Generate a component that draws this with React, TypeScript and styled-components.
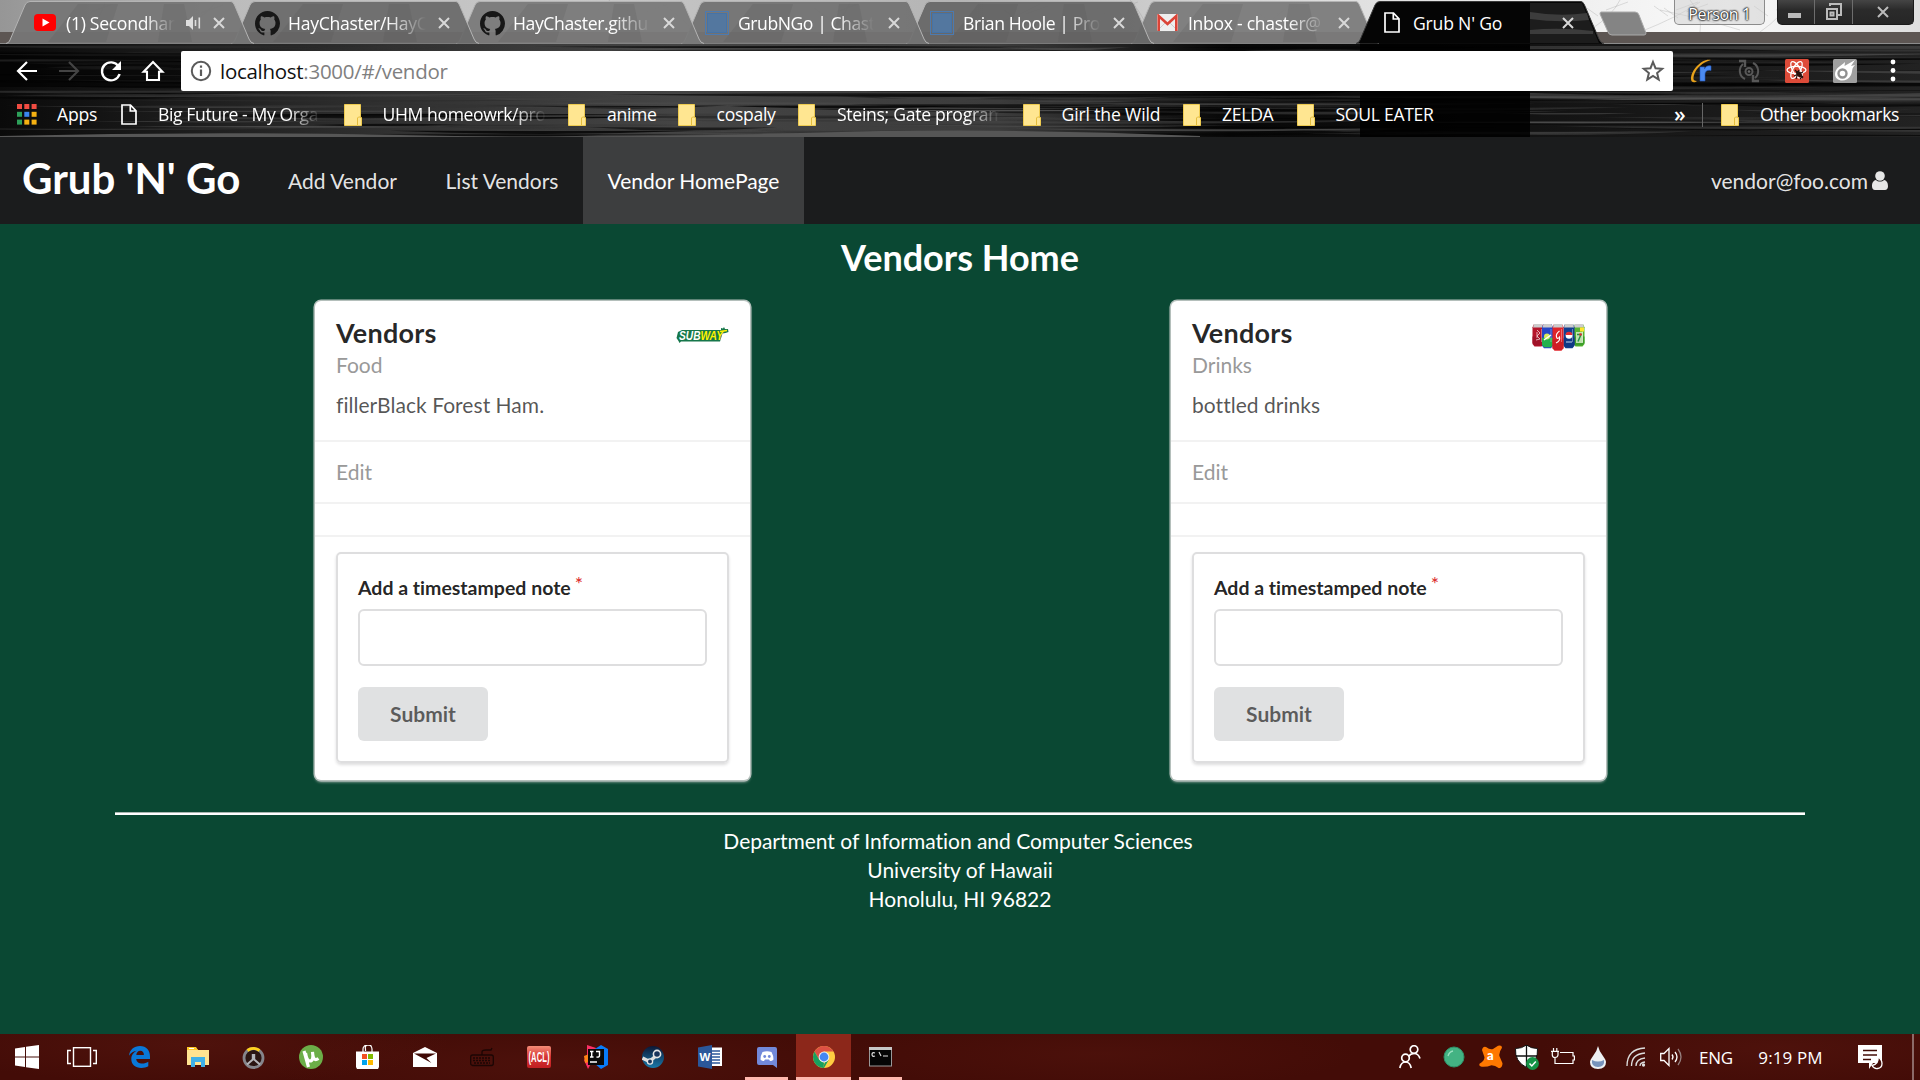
import React from 'react';
import styled, { createGlobalStyle, css } from 'styled-components';

const GlobalStyle = createGlobalStyle`
  * { box-sizing: border-box; }
  body { margin: 0; overflow: hidden; background: #0a4833; }
`;

const ui = '"Open Sans", "Noto Sans", sans-serif';

const Screen = styled.div`
  width: 1920px;
  height: 1080px;
  display: flex;
  flex-direction: column;
  overflow: hidden;
  font-family: Lato, "Liberation Sans", sans-serif;
  font-size: 21px;
  font-variant-ligatures: none;
`;

/* ---------- browser chrome ---------- */
const Chrome = styled.header`
  position: relative;
  height: 137px;
  flex: none;
  display: flex;
  flex-direction: column;
  font-family: ${ui};
  color: #fff;
  background: #101010;
  isolation: isolate;
`;
const Texture = styled.svg`
  position: absolute;
  inset: 0;
  z-index: -1;
  display: block;
`;
const TabStrip = styled.div`
  height: 43px;
  display: flex;
  padding-left: 8px;
`;
const TabBox = styled.div<{ $z: number; $first?: boolean }>`
  position: relative;
  z-index: ${(p) => p.$z};
  width: 225px;
  height: 43px;
  flex: none;
  display: flex;
  align-items: center;
  padding: 2px 0 0 ${(p) => (p.$first ? 25 : 22)}px;
`;
const TabShape = styled.svg`
  position: absolute;
  left: 0;
  top: 0;
  z-index: -1;
  overflow: visible;
`;
const TabIcon = styled.span`
  width: 24px;
  height: 24px;
  flex: none;
  display: grid;
  place-items: center;
  margin-right: 9px;
`;
const TabTitle = styled.span<{ $w: number; $fade?: boolean; $ls?: number }>`
  width: ${(p) => p.$w}px;
  font-size: 17.6px;
  letter-spacing: ${(p) => p.$ls ?? -0.3}px;
  line-height: 26px;
  white-space: nowrap;
  ${(p) => p.$fade && css`mask-image: linear-gradient(90deg, #000 72%, transparent);`}
`;
const TabEnd = styled.span`
  display: flex;
  align-items: center;
  gap: 11px;
  margin-left: auto;
  margin-right: 7px;
`;
const ActiveTabEnd = styled(TabEnd)`
  margin-right: 8px;
`;
const NewTab = styled.svg`
  margin: 11px 0 0 14px;
  width: 52px;
  height: 26px;
  flex: none;
`;
const WindowTools = styled.div`
  display: flex;
  margin-left: auto;
  padding-right: 6px;
  gap: 12px;
`;
const Person = styled.div`
  width: 91px;
  height: 25px;
  border: 1px solid #8b8b8b;
  border-top: 0;
  border-radius: 0 0 5px 5px;
  background: rgba(205, 205, 205, 0.5);
  color: #fff;
  font-size: 16px;
  letter-spacing: -0.4px;
  line-height: 28px;
  text-align: center;
  text-shadow: 0 0 2px #000, 0 0 2px #000, 0 0 2px #222;
`;
const WindowButtons = styled.div`
  display: grid;
  grid-template-columns: 36px 38px 1fr;
  width: 137px;
  height: 25px;
  border: 1px solid #1a1a1a;
  border-top: 0;
  border-radius: 0 0 5px 5px;
  overflow: hidden;
  background: linear-gradient(#454545, #2b2b2b 40%, #262626);
`;
const WindowButton = styled.div`
  display: grid;
  place-items: center;
  & + & { border-left: 1px solid #6d6d6d; }
`;
const Toolbar = styled.div`
  height: 56px;
  display: flex;
  align-items: center;
  padding-left: 15px;
`;
const NavIcons = styled.div`
  display: flex;
  gap: 18px;
  width: 166px;
`;
const Omnibox = styled.div`
  width: 1492px;
  height: 40px;
  border-radius: 2px;
  background: #fff;
  display: flex;
  align-items: center;
  padding: 0 8px 0 8px;
`;
const Url = styled.span`
  margin-left: 7px;
  flex: 1;
  color: #808080;
  font-size: 20.5px;
  letter-spacing: -0.28px;
  line-height: 36px;
  b { color: #111; font-weight: 400; }
`;
const Extensions = styled.div`
  flex: 1;
  display: flex;
  align-items: center;
  gap: 24px;
  padding: 0 24px 0 16px;
  svg:last-child { margin-left: auto; }
`;
const Bookmarks = styled.div`
  height: 38px;
  display: flex;
  align-items: center;
  padding: 0 22px 5px 17px;
  margin-top: -1px;
`;
const Bookmark = styled.div`
  display: flex;
  align-items: center;
  margin-right: 22.5px;
  height: 32px;
`;
const BookmarkIcon = styled.span<{ $w: number }>`
  width: ${(p) => p.$w}px;
  height: 22px;
  flex: none;
  svg { display: block; }
`;
const BookmarkLabel = styled.span<{ $w: number; $ls?: number; $fade?: boolean }>`
  width: ${(p) => p.$w}px;
  font-size: 17.6px;
  letter-spacing: ${(p) => p.$ls ?? -0.3}px;
  line-height: 26px;
  padding-bottom: 1px;
  white-space: nowrap;
  ${(p) => p.$fade && css`mask-image: linear-gradient(90deg, #000 80%, transparent);`}
`;
const Overflow = styled.span`
  margin-left: auto;
  width: 28px;
  font-size: 21px;
  font-weight: 600;
  line-height: 26px;
  padding-bottom: 2px;
`;
const OtherBookmarks = styled.div`
  display: flex;
  align-items: center;
  height: 24px;
  padding-left: 18px;
  border-left: 1px solid #666;
`;

/* ---------- page ---------- */
const Page = styled.main`
  height: 897px;
  flex: none;
  background: #0a4833;
  color: #fff;
  display: flex;
  flex-direction: column;
`;
const Menu = styled.nav`
  height: 87px;
  flex: none;
  display: flex;
  background: #1b1c1d;
`;
const Brand = styled.h1`
  margin: 0;
  padding: 0 0 2px 22px;
  width: 264px;
  font-size: 42px;
  line-height: 83px;
  font-weight: 700;
  white-space: nowrap;
`;
const MenuItem = styled.a<{ $w: number; $active?: boolean }>`
  width: ${(p) => p.$w}px;
  text-align: center;
  line-height: 88px;
  color: ${(p) => (p.$active ? '#fff' : 'rgba(255,255,255,.9)')};
  background: ${(p) => (p.$active ? '#3d3e3f' : 'transparent')};
  white-space: nowrap;
`;
const UserItem = styled.div`
  margin-left: auto;
  padding-right: 32px;
  display: flex;
  align-items: center;
  gap: 4px;
  line-height: 88px;
  color: rgba(255, 255, 255, 0.9);
`;
const Title = styled.h2`
  margin: 11px 0 0;
  font-size: 36px;
  line-height: 44px;
  font-weight: 700;
  text-align: center;
`;
const Columns = styled.section`
  display: grid;
  grid-template-columns: 435px 435px;
  justify-content: center;
  column-gap: 421px;
  margin: 22px 0 0 1px;
`;
const CardBox = styled.article`
  height: 479px;
  background: #fff;
  border-radius: 6px;
  box-shadow: 0 0 0 1.5px #b4bfbb, 0 2px 3px 0 #b0bab6;
  display: flex;
  flex-direction: column;
`;
const CardContent = styled.div`
  height: 139px;
  padding: 15px 21px;
  display: flex;
  justify-content: space-between;
`;
const CardHeading = styled.h3`
  margin: 0;
  color: rgba(0, 0, 0, 0.85);
  font-size: 27px;
  line-height: 34px;
  letter-spacing: 0.25px;
`;
const Meta = styled.div`
  margin-top: 1px;
  line-height: 28px;
  color: #999;
`;
const Description = styled.p`
  margin: 12px 0 0;
  line-height: 28px;
  color: rgba(0, 0, 0, 0.68);
  letter-spacing: 0.04px;
`;
const Strip = styled.div<{ $h: number }>`
  height: ${(p) => p.$h}px;
  border-top: 2px solid #f2f2f2;
  padding-left: 21px;
  line-height: 60px;
  color: #999;
`;
const FormArea = styled.div`
  flex: 1;
  border-top: 2px solid #f2f2f2;
  padding: 15px 21px 0;
`;
const NoteForm = styled.form`
  height: 211px;
  border: 2px solid #dededf;
  border-radius: 5px;
  box-shadow: 0 2px 3px rgba(34, 36, 38, 0.15);
  padding: 19px 20px;
  display: flex;
  flex-direction: column;
  align-items: flex-start;
`;
const Label = styled.label`
  color: rgba(0, 0, 0, 0.87);
  font-size: 19.5px;
  font-weight: 700;
  line-height: 29px;
  white-space: nowrap;
`;
const Star = styled.span`
  margin-left: 4px;
  color: #db2828;
  font-weight: 400;
  position: relative;
  top: -4px;
`;
const Input = styled.input`
  width: 100%;
  height: 57px;
  margin-top: 7px;
  border: 2px solid #dededf;
  border-radius: 6px;
  background: #fff;
  outline: 0;
`;
const Submit = styled.button`
  width: 130px;
  height: 54px;
  margin-top: 21px;
  padding: 0 0 1px;
  border: 0;
  border-radius: 6px;
  background: #e0e1e2;
  color: rgba(0, 0, 0, 0.6);
  font: 700 21px Lato, sans-serif;
`;
const Rule = styled.hr`
  width: 1690px;
  height: 3px;
  margin: 32px auto 0;
  border: solid #fff;
  border-color: #a9b5b0 #fff #fff;
  border-width: 1px 0 2px;
`;
const Footer = styled.footer`
  margin-top: 11px;
  text-align: center;
  line-height: 29px;
  div:first-child { margin-right: 4px; letter-spacing: -0.02px; }
`;

/* ---------- taskbar ---------- */
const Taskbar = styled.footer`
  height: 46px;
  flex: none;
  display: flex;
  color: #fff;
  font-family: ${ui};
  font-size: 18px;
  background:
    radial-gradient(ellipse 260px 40px at 190px 10px, rgba(120, 40, 30, 0.22), transparent),
    radial-gradient(ellipse 300px 40px at 560px 30px, rgba(120, 40, 30, 0.18), transparent),
    radial-gradient(ellipse 260px 36px at 1100px 20px, rgba(120, 40, 30, 0.16), transparent),
    radial-gradient(ellipse 240px 40px at 1780px 14px, rgba(120, 40, 30, 0.2), transparent),
    #430c07;
`;
const Task = styled.div<{ $w?: number; $open?: boolean; $active?: boolean }>`
  width: ${(p) => p.$w ?? 57}px;
  display: grid;
  place-items: center;
  ${(p) => p.$open && css`background: linear-gradient(#ffb8ae, #ffb8ae) center bottom / 43px 3px no-repeat;`}
  ${(p) => p.$active && css`background: linear-gradient(#ffb8ae, #ffb8ae) center bottom / 55px 3px no-repeat, linear-gradient(#8c271a, #8c271a) center / 55px 100% no-repeat;`}
  svg { display: block; }
`;
const Tray = styled.div`
  margin-left: auto;
  display: flex;
`;
const TrayCell = styled.div<{ $w: number; $ls?: number }>`
  width: ${(p) => p.$w}px;
  display: grid;
  place-items: center;
  white-space: nowrap;
  font-size: 17px;
  letter-spacing: ${(p) => p.$ls ?? 0}px;
`;
const ShowDesktop = styled.div`
  width: 8px;
  border-left: 2px solid #8c6a68;
`;

/* ---------- texture ---------- */
const streaks = Array.from({ length: 230 }, (_, i) => {
  const r = (k: number) => {
    const v = Math.sin(i * 12.9898 + k * 78.233) * 43758.5453;
    return v - Math.floor(v);
  };
  const x = r(1) * 1900 - 120;
  const y = 45 + r(2) * 91;
  const w = 120 + r(3) * 380;
  const shade = r(8) > 0.6 ? 4 : Math.round(40 + r(4) * 50);
  return { x, y, w, t: 1.5 + r(5) * 5, shade, bend: (r(6) - 0.5) * 5, o: 0.35 + r(7) * 0.5 };
});

const branches = [
  [20, 30, 60, 4], [80, 40, 105, 2], [170, 38, 215, 3], [440, 38, 520, 4], [560, 34, 610, 0],
  [700, 40, 660, 2], [820, 40, 850, 2], [960, 38, 1040, 4], [1150, 40, 1130, 0], [1240, 40, 1290, 4],
  [1590, 30, 1620, 0], [1640, 32, 1700, 2], [1700, 32, 1690, 0], [1760, 32, 1790, 0], [1660, 10, 1740, 30],
];

const ChromeTexture = () => (
  <Texture width="1920" height="137" viewBox="0 0 1920 137">
    <defs>
      <linearGradient id="frame">
        <stop offset="0" stopColor="#969696" /><stop offset=".12" stopColor="#bcbcbc" />
        <stop offset=".3" stopColor="#c8c8c8" /><stop offset=".5" stopColor="#b4b4b4" />
        <stop offset=".65" stopColor="#d8d8d8" /><stop offset=".82" stopColor="#efefef" />
        <stop offset=".9" stopColor="#fafafa" /><stop offset="1" stopColor="#dedede" />
      </linearGradient>
      <linearGradient id="bar">
        <stop offset="0" stopColor="#0a0a0a" /><stop offset=".2" stopColor="#303030" />
        <stop offset=".35" stopColor="#444" /><stop offset=".52" stopColor="#3c3c3c" />
        <stop offset=".64" stopColor="#070707" /><stop offset="1" stopColor="#222" />
      </linearGradient>
      <clipPath id="barClip"><rect y="44" width="1920" height="93" /></clipPath>
    </defs>
    <rect width="1920" height="43" fill="url(#frame)" />
    {branches.map(([a, b, c, d], i) => (
      <path key={i} d={`M${a} ${b}Q${(a + c) / 2 + 8} ${(b + d) / 2} ${c} ${d}m-14 10l22 -8m-30 14l-14 -10`} stroke="#888" strokeOpacity=".25" fill="none" />
    ))}
    <rect y="32" width="1920" height="11" fill="#5d5653" />
    <rect y="43" width="1920" height="94" fill="url(#bar)" />
    <g clipPath="url(#barClip)">
      {streaks.map((s, i) => (
        <path key={i} d={`M${s.x} ${s.y}q${s.w / 2} ${s.bend} ${s.w} 0q${-s.w / 2} ${s.bend + s.t} ${-s.w} 0z`} fill={`rgb(${s.shade},${s.shade},${s.shade})`} opacity={s.o} />
      ))}
      <path d="M0 136Q200 131 400 135T800 133T1200 136V137H0Z" fill="#565656" />
      <rect y="53" width="181" height="34" fill="#000" opacity=".6" />
      <rect x="1360" y="43" width="170" height="94" fill="#000" opacity=".88" />
      <path d="M1530 46h390v3h-390zM1530 93q200 6 390 0v4q-190 6-390 1z" fill="#555" opacity=".5" />
    </g>
    <path d="M0 43.500H1360M1602 43.500H1920" stroke="#8c8c8c" />
  </Texture>
);

/* ---------- icons ---------- */
const Close = ({ color = '#d8d8d8' }) => (
  <svg width="14" height="14" viewBox="0 0 14 14"><path d="M2 2l10 10M12 2L2 12" stroke={color} strokeWidth="2" /></svg>
);
const Speaker = () => (
  <svg width="15" height="14" viewBox="0 0 15 14"><path d="M0 4h3l4-4v14l-4-4H0z" fill="#ddd" /><path d="M9.5 4v6M13.3 1.5v11" stroke="#ddd" strokeWidth="1.6" /></svg>
);
const YouTube = () => (
  <svg width="22" height="17" viewBox="0 0 22 17"><rect width="22" height="17" rx="4" fill="#f00" /><path d="M8.5 4.5v8l7-4z" fill="#fff" /></svg>
);
const GitHub = () => (
  <svg width="25" height="25" viewBox="0 0 16 16"><path fill="#171717" d="M8 0C3.58 0 0 3.58 0 8c0 3.54 2.29 6.53 5.47 7.59.4.07.55-.17.55-.38 0-.19-.01-.82-.01-1.49-2.01.37-2.53-.49-2.69-.94-.09-.23-.48-.94-.82-1.13-.28-.15-.68-.52-.01-.53.63-.01 1.08.58 1.23.82.72 1.21 1.87.87 2.33.66.07-.52.28-.87.51-1.07-1.78-.2-3.64-.89-3.64-3.95 0-.87.31-1.59.82-2.15-.08-.2-.36-1.02.08-2.12 0 0 .67-.21 2.2.82.64-.18 1.32-.27 2-.27s1.36.09 2 .27c1.53-1.04 2.2-.82 2.2-.82.44 1.1.16 1.92.08 2.12.51.56.82 1.27.82 2.15 0 3.07-1.87 3.75-3.65 3.95.29.25.54.73.54 1.48 0 1.07-.01 1.93-.01 2.2 0 .21.15.46.55.38A8.01 8.01 0 0 0 16 8c0-4.42-3.58-8-8-8z" /></svg>
);
const BlueSquare = () => (
  <svg width="24" height="24" viewBox="0 0 24 24"><rect x=".5" y=".5" width="23" height="23" fill="none" stroke="#4c7ab0" /><rect x="2.5" y="2.5" width="19" height="19" fill="#53779f" stroke="#4473a8" /></svg>
);
const Gmail = () => (
  <svg width="21" height="17" viewBox="0 0 21 17"><rect width="21" height="17" rx="1.5" fill="#eee" /><path d="M1 16L8 9M20 16l-7-7" stroke="#ccc" /><path d="M1.700 17V2l8.800 8 8.800-8v15" fill="none" stroke="#db4437" strokeWidth="2.600" /></svg>
);
const Doc = () => (
  <svg width="16" height="21" viewBox="0 0 16 21"><path d="M1 1h8.5L15 6.8V20H1zM9.3 1v6H15" fill="none" stroke="#fff" strokeWidth="1.7" /></svg>
);
const Folder = () => (
  <svg width="18" height="22" viewBox="0 0 18 22"><path d="M.5.5h16v13h1v8H.5z" fill="#ffe691" stroke="#eecb50" /><path d="M13.5 21v-7l1-1h2" fill="none" stroke="#e5bd3c" /></svg>
);
const AppsGrid = () => (
  <svg width="20" height="21" viewBox="0 0 20 21">
    {['#f04c42', '#f04c42', '#f04c42', '#2da05a', '#3a86f0', '#f5b112', '#2da05a', '#f5b112', '#f5b112'].map((c, i) => (
      <rect key={i} x={(i % 3) * 7.3} y={Math.floor(i / 3) * 7.8} width="5" height="5" fill={c} />
    ))}
  </svg>
);
const Back = ({ color }: { color: string }) => (
  <svg width="24" height="24" viewBox="0 0 24 24"><path d="M12 3l-9 9 9 9M3 12h19" fill="none" stroke={color} strokeWidth="2.2" /></svg>
);
const Forward = ({ color }: { color: string }) => (
  <svg width="24" height="24" viewBox="0 0 24 24"><path d="M12 3l9 9-9 9M21 12H2" fill="none" stroke={color} strokeWidth="2.2" /></svg>
);
const Reload = () => (
  <svg width="24" height="24" viewBox="0 0 24 24"><path d="M19.5 7.4A9 9 0 1 0 20.6 15" fill="none" stroke="#fff" strokeWidth="2.4" /><path d="M22 2v9h-9z" fill="#fff" /></svg>
);
const Home = () => (
  <svg width="24" height="24" viewBox="0 0 24 24"><path d="M2.6 12.8L12 3l9.400 9.800H18V21H6v-8.200z" fill="none" stroke="#fff" strokeWidth="2.1" /></svg>
);
const Info = () => (
  <svg width="24" height="24" viewBox="0 0 24 24"><circle cx="12" cy="12" r="9.200" fill="none" stroke="#5a5a5a" strokeWidth="2" /><path d="M12 10.500v6.500M12 6.500v2.300" stroke="#5a5a5a" strokeWidth="2.200" /></svg>
);
const StarIcon = () => (
  <svg width="24" height="24" viewBox="0 0 24 24"><path d="M12 3l2.500 6.200 6.700.5-5.100 4.300 1.600 6.500L12 17l-5.700 3.500 1.600-6.500-5.100-4.300 6.700-.5z" fill="none" stroke="#5a5a5a" strokeWidth="2" /></svg>
);
const ExtR = () => (
  <svg width="24" height="24" viewBox="0 0 24 24"><path d="M11 22V8h4.500v2C17 7 19 6.500 22 7v4.500c-3.500-.7-6 .5-6 4V22z" fill="#4c8bf0" stroke="#2459c0" strokeWidth=".6" /><path d="M22 1C13-1 2 11 2 20c0 4 4 4 6 2-4 0-4-2-3-6C7 9 14 3 22 1z" fill="#e7a11b" /></svg>
);
const ExtSync = () => (
  <svg width="24" height="24" viewBox="0 0 24 24"><g fill="none" stroke="#585858" strokeWidth="2"><path d="M8 20A9 9 0 0 1 6 5M16 4a9 9 0 0 1 2 15" /><circle cx="12" cy="12.500" r="3.500" /><path d="M2 2h6v6M22 22h-6v-6" strokeWidth="2.400" /></g><circle cx="12" cy="12.500" r="1.300" fill="#666" /></svg>
);
const ExtReact = () => (
  <svg width="24" height="24" viewBox="0 0 24 24"><rect width="24" height="24" rx="1.500" fill="#dd4b39" /><g fill="none" stroke="#fff" strokeWidth="1.300"><ellipse cx="11.500" cy="11" rx="9.500" ry="3.700" /><ellipse cx="11.500" cy="11" rx="9.500" ry="3.700" transform="rotate(60 11.500 11)" /><ellipse cx="11.500" cy="11" rx="9.500" ry="3.700" transform="rotate(120 11.500 11)" /></g><path d="M10 11l8 8M9 17l9-4M11 20l3-9M15 20l3-3" stroke="#26110e" strokeWidth="1.200" /><ellipse cx="14" cy="15" rx="2.200" ry="3.600" transform="rotate(-40 14 15)" fill="#26110e" /></svg>
);
const ExtComet = () => (
  <svg width="24" height="24" viewBox="0 0 24 24"><rect width="24" height="24" rx="1.500" fill="#a0a0a0" /><path d="M2 15C2 9 8 7 12 3l-.5 4L22 1l-4 6 4-1c-4 4-2 6-4 10-4 8-16 7-16-1z" fill="#fff" /><circle cx="9.500" cy="14.500" r="4" fill="none" stroke="#909090" strokeWidth="2.400" /></svg>
);
const Dots = () => (
  <svg width="6" height="26" viewBox="0 0 6 26" fill="#fff"><circle cx="3" cy="4" r="2.400" /><circle cx="3" cy="12.500" r="2.400" /><circle cx="3" cy="21" r="2.400" /></svg>
);
const UserIcon = () => (
  <svg width="16" height="19" viewBox="0 0 16 19"><g fill="#e6e6e6"><circle cx="8" cy="5" r="4.800" /><path d="M4 9c1 1 2.400 1.500 4 1.500S11 10 12 9c3 .5 4 3.300 4 6.300 0 2.200-1.200 3.700-3 3.700H3c-1.800 0-3-1.500-3-3.700C0 12.300 1 9.500 4 9z" /></g></svg>
);

const SubwayLogo = () => (
  <svg width="53" height="52" viewBox="0 0 53 50">
    <defs>
      <linearGradient id="subway"><stop offset=".47" stopColor="#fff" /><stop offset=".47" stopColor="#fff200" /></linearGradient>
    </defs>
    <path d="M2 15l4-2h39V11l2 .5L48 10l1 2h3l.500 3-3 1-3 .5-2.500 8H5l-1.500 1.500L2.500 24l-2-3z" fill="#16774b" />
    <text x="3" y="23.300" textLength="44" lengthAdjust="spacingAndGlyphs" fontFamily="Liberation Sans, sans-serif" fontSize="13.500" fontWeight="700" fontStyle="italic" fill="url(#subway)">SUBWAY</text>
    <path d="M44 14.500l7-1" stroke="#fff200" strokeWidth="1.700" />
  </svg>
);

const cans = [
  { x: 0, y: 9, h: 29, c: '#b5152b', d: '#a01228' },
  { x: 41, y: 9, h: 29, c: '#58b531', d: '#3d9f2b' },
  { x: 9.500, y: 9, h: 31, c: '#2546c7', d: '#22b14c' },
  { x: 31, y: 9, h: 31, c: '#123f91', d: '#0f3885' },
  { x: 20, y: 9, h: 34, c: '#e0252b', d: '#cf1d24' },
];
const CansPicture = () => (
  <svg width="53" height="52" viewBox="0 1 53 52">
    {cans.map((k, i) => (
      <g key={i} transform={`translate(${k.x} ${k.y})`}>
        <path d={`M2 0h8l1.500 4v${k.h - 8.500}l-2 3h-7L.5 ${k.h - 4.500}V4z`} transform="scale(1 .82)" fill={k.c} />
        <path d={`M.5 ${(k.h - 8) * 0.6}h11v${(k.h - 8) * 0.3}l-2 2.500h-7l-2-2.500z`} fill={k.d} />
        <path d="M2 0h8l1 3.500H1z" fill="#ccc" />
        <path d="M9.500 5v13" stroke="#fff" strokeOpacity=".35" />
      </g>
    ))}
    <path d="M5 15l3 3-3 3 3 3-4 1M5 17v6" stroke="#f3d4d8" strokeWidth=".8" fill="none" />
    <circle cx="15" cy="21.500" r="3" fill="#d8e85a" /><path d="M12 25l7-5" stroke="#fff" strokeWidth="1.500" />
    <path d="M27.500 16q-4 3-3 6t3 0q1 4-3.500 6" stroke="#fff" strokeWidth="1.100" fill="none" />
    <circle cx="37" cy="20.500" r="3.300" fill="#fff" /><path d="M33.700 20a3.300 3.300 0 0 1 6.600 0z" fill="#e02a31" /><path d="M34 27h6" stroke="#c8d5ee" />
    <rect x="44" y="17" width="7" height="11" fill="#ebf5dc" opacity=".75" /><path d="M45 19.500h4l-3 7" stroke="#219447" strokeWidth="1.500" fill="none" /><circle cx="48.500" cy="19.500" r="1.300" fill="#e02a31" /><path d="M48 12.500h4v4h-4z" fill="#ffe52a" />
  </svg>
);

const WindowsLogo = () => (
  <svg width="24" height="24" viewBox="0 0 24 24" fill="#fff"><path d="M0 3.400L10 2v9.500H0zM11 1.800L24 0v11.500H11zM0 12.500h10V22L0 20.600zM11 12.500h13V24l-13-1.800z" /></svg>
);
const TaskView = () => (
  <svg width="30" height="20" viewBox="0 0 30 20" fill="none" stroke="#fff" strokeWidth="1.400"><rect x="6.500" y=".7" width="17" height="18.600" /><path d="M4 3.500H.7v13H4M26 3.500h3.300v13H26" /></svg>
);
const Edge = () => (
  <svg width="21" height="22" viewBox="0 0 21 22"><path d="M0 9.800C.8 3.500 5 0 11 0c6.500 0 10 4.500 10 10.500V13H7.200c.2 3.200 3 4.600 6 4.600 2.300 0 4.300-.7 6.100-1.800v4.500C17.300 21.500 15 22 12.300 22 6.200 22 2.300 18.500 2.300 13c0-4 2.300-6.800 5.700-8.200C4.500 5 1.800 6.900 0 9.800zM7.300 9h7.600c0-2.600-1.200-4.200-3.600-4.200S7.600 6.500 7.300 9z" fill="#0a78d8" /></svg>
);
const Explorer = () => (
  <svg width="22" height="20" viewBox="0 0 22 20"><path d="M0 1h9l2 2h11v15H0z" fill="#ffe391" /><path d="M0 0h9l2 3H0z" fill="#ffc928" /><path d="M2 1.500h5" stroke="#fff" /><path d="M4 20V10h14v10h-4v-5H8v5z" fill="#3fb0e8" /></svg>
);
const Overwatch = () => (
  <svg width="23" height="23" viewBox="0 0 23 23"><circle cx="11.500" cy="12" r="9.500" fill="#2b1512" stroke="#85858b" strokeWidth="2.800" /><path d="M5.500 4.500a10 10 0 0 1 12 0" fill="none" stroke="#ffd21c" strokeWidth="3" /><path d="M10.800 8v5.500L5 18.500M12.200 8v5.500l5.800 5" fill="none" stroke="#b5b5b9" strokeWidth="2" /></svg>
);
const UTorrent = () => (
  <svg width="24" height="24" viewBox="0 0 24 24"><circle cx="12" cy="12" r="12" fill="#6cae48" /><path d="M5 6l4.500 16M6.500 8c1 6 2 8 4.500 8s3.500-3 2.500-9c.5 7 2 9 6 6.500" fill="none" stroke="#fff" strokeWidth="3.200" /></svg>
);
const Store = () => (
  <svg width="23" height="24" viewBox="0 0 23 24"><path d="M0 6.500h23V22l-1 2H1l-1-2z" fill="#fff" /><path d="M7 7V4a4.500 4 0 0 1 9 0v3M9.500 6V4a3 3 0 0 1 6-2" fill="none" stroke="#fff" strokeWidth="1.200" /><path d="M6 9h5v5H6z" fill="#f25022" /><path d="M12 9h5v5h-5z" fill="#7fba00" /><path d="M6 15h5v5H6z" fill="#00a4ef" /><path d="M12 15h5v5h-5z" fill="#ffb900" /></svg>
);
const Mail = () => (
  <svg width="24" height="20" viewBox="0 0 24 20"><path d="M0 6l12-6 12 6v14H0z" fill="#fff" /><path d="M1 6.500h22L13.500 11l5 5L1 6.500z" fill="#3f0a06" /></svg>
);
const Keyboard = () => (
  <svg width="24" height="20" viewBox="0 0 24 20" fill="none" stroke="#1c0604" strokeWidth="1.300"><rect x=".7" y="8" width="22.600" height="10.500" rx="2" /><path d="M3 11h18M3 13.500h18M4 16h16" strokeDasharray="2 1" /><path d="M12 8V5q0-2 4-2h5l1-2" /></svg>
);
const Acl = () => (
  <svg width="24" height="22" viewBox="0 0 24 22"><defs><linearGradient id="acl" x2="0" y2="1"><stop stopColor="#f58d78" /><stop offset=".5" stopColor="#d53331" /><stop offset="1" stopColor="#c01f22" /></linearGradient></defs><rect width="24" height="22" rx="2" fill="url(#acl)" /><text x="1.500" y="16" textLength="21" lengthAdjust="spacingAndGlyphs" fontFamily="Liberation Sans, sans-serif" fontWeight="700" fontSize="14" fill="#fff">(ACL)</text></svg>
);
const IntelliJ = () => (
  <svg width="24" height="24" viewBox="0 0 24 24"><path d="M3 0l9 3-2 10-6 11-4-9 3-3z" fill="#fc2f65" /><path d="M0 11l5-2v8l-4 1z" fill="#ff8318" /><path d="M11 4l6-4 7 4v16l-7 4-7-6z" fill="#087cfa" /><rect x="4" y="4" width="16" height="16" fill="#090909" /><path d="M6 6.500h3.500M7.700 6.500v5.500M6 12h3.500M12 6.500h3.500v4q0 2-3 1.500" fill="none" stroke="#fff" strokeWidth="1.400" /><path d="M6 17h7" stroke="#fff" strokeWidth="1.500" /></svg>
);
const Steam = () => (
  <svg width="22" height="22" viewBox="0 0 22 22"><defs><linearGradient id="stm" x2="0" y2="1"><stop stopColor="#0c1735" /><stop offset="1" stopColor="#1979aa" /></linearGradient></defs><circle cx="11" cy="11" r="11" fill="url(#stm)" /><path d="M0.500 12l7 3.500 8-7" stroke="#ddd" strokeWidth="3.500" fill="none" /><circle cx="15" cy="8" r="3.600" fill="#18335a" stroke="#e5e5e5" strokeWidth="1.600" /><circle cx="8" cy="15.500" r="2.600" fill="#18335a" stroke="#e5e5e5" strokeWidth="1.300" /></svg>
);
const Word = () => (
  <svg width="24" height="24" viewBox="0 0 24 24"><path d="M13 2.500h11v18.500H13z" fill="#fff" /><path d="M14 6h8M14 9h8M14 12h8M14 15h8M14 18h8" stroke="#2b579a" strokeWidth="1.400" /><path d="M0 2.500L14 0v24L0 21.500z" fill="#2b579a" /><text x="1.500" y="16" fontFamily="Liberation Sans, sans-serif" fontWeight="700" fontSize="11.500" fill="#fff">W</text></svg>
);
const Discord = () => (
  <svg width="20" height="22" viewBox="0 0 20 22"><path d="M2 1h16q2 0 2 2v19l-4-3H2q-2 0-2-2V3q0-2 2-2z" fill="#7289da" /><path d="M5.500 6Q10 4.500 14.500 6q2 3.500 2 7.500-1.500 1.700-3.500 1.500l-1-1.500H8L7 15q-2 .2-3.500-1.500 0-4 2-7.500z" fill="#fff" /><circle cx="7.700" cy="10.500" r="1.400" fill="#7289da" /><circle cx="12.300" cy="10.500" r="1.400" fill="#7289da" /></svg>
);
const ChromeLogo = () => (
  <svg width="22" height="22" viewBox="0 0 22 22"><circle cx="11" cy="11" r="11" fill="#ffcd41" /><path d="M1.500 5.500A11 11 0 0 1 20.500 5.500H11L6.200 13.700z" fill="#dd5044" /><path d="M1.500 5.500L6.200 13.700 11 16.500 10.500 22A11 11 0 0 1 1.500 5.500z" fill="#18a05f" /><path d="M15.800 13.700L11 22h-1l2-6z" fill="#18a05f" /><circle cx="11" cy="11" r="5.400" fill="#f1f1f1" /><circle cx="11" cy="11" r="4.400" fill="#4587f3" /></svg>
);
const Cmd = () => (
  <svg width="23" height="20" viewBox="0 0 23 20"><rect x=".5" y=".5" width="22" height="18.500" fill="#050505" stroke="#999" /><path d="M0 1.500h23" stroke="#c7c7c7" strokeWidth="3" /><path d="M6 6q-3-1-3 1.500T6 9M8 6v.1M8 8.500v.1M10 5l2 4M14 9h5" stroke="#ddd" strokeWidth="1.200" fill="none" /></svg>
);

const People = () => (
  <svg width="22" height="24" viewBox="0 0 22 24" fill="none" stroke="#fff" strokeWidth="1.700"><circle cx="15" cy="4.500" r="3.800" /><circle cx="6.500" cy="13" r="3.800" /><path d="M9.500 11.500Q11.500 8.500 15 8.500q4.500 0 6 5M.8 23Q2 17 6.500 17t5.700 6" /></svg>
);
const GreenDot = () => (
  <svg width="22" height="22" viewBox="0 0 22 22"><circle cx="11" cy="11" r="10" fill="#43b383" stroke="#2e9168" /><path d="M5 10q1-4 5-5" fill="none" stroke="#9be0c0" strokeWidth="1.300" /></svg>
);
const Avast = () => (
  <svg width="24" height="24" viewBox="0 0 24 24"><path d="M3 5q1-4 4-3Q11 5 14 4L19 .8q4-1 4 2-3.500 5-2.500 8.500l3 7q0 4.500-3.500 5-4-3-7.500-3-4 1.500-8 1.500-5 0-4-3 5-3 5-6.500Q4 8 3 5z" fill="#ff7800" /><text x="8" y="15" fontFamily="Lato, sans-serif" fontWeight="900" fontSize="13" fill="#fff">a</text></svg>
);
const Defender = () => (
  <svg width="24" height="25" viewBox="0 0 24 25"><path d="M11.500 0Q16 3.500 22.500 3.500q1 13-11 19Q-.5 16.500.5 3.500 7 3.500 11.500 0z" fill="#fff" stroke="#111" /><path d="M11.500 0v22M1 11h21" stroke="#111" strokeWidth="1.300" /><circle cx="17.500" cy="18.500" r="6.400" fill="#159347" /><path d="M14.500 18.500l2.300 2.500 4-4.500" fill="none" stroke="#fff" strokeWidth="1.500" /></svg>
);
const Battery = () => (
  <svg width="24" height="18" viewBox="0 0 24 18" fill="none" stroke="#fff" strokeWidth="1.200"><path d="M4 9.500v6h18V12h1.400V8H22V4.500H9M2.500 0v3M5.800 0v3M0 3.300h8M1.300 3.300V7q0 2.500 2.700 2.500T7 7V3.300" /></svg>
);
const Drop = () => (
  <svg width="16" height="23" viewBox="0 0 16 23"><path d="M8 0q1 5 5 10 3 4 3 6 0 7-8 7t-8-7q0-2 3-6Q7 5 8 0z" fill="#eef0f3" /><path d="M2 14q6 3 12 0 1 7-6 7T2 14z" fill="#7793bc" /></svg>
);
const Wifi = () => (
  <svg width="20" height="20" viewBox="0 0 20 20" fill="none" stroke="#ddd" strokeWidth="1.300"><path d="M1 19Q1 2 19 1M5.500 19Q5.500 7 19 6M10 19q0-7 9-8M14 19q0-3.500 5-4" /><circle cx="17.500" cy="18" r="1" fill="#fff" /></svg>
);
const Volume = () => (
  <svg width="23" height="20" viewBox="0 0 23 20" fill="none" stroke="#fff" strokeWidth="1.300"><path d="M.7 6.500H4L9 1.500v17l-5-5H.7z" /><path d="M12 7.500q2 2.500 0 5" /><path d="M15 5q4 5 0 10" /><path d="M18 2q6 8 0 16" stroke="#957f7e" /></svg>
);
const Notice = () => (
  <svg width="25" height="25" viewBox="0 0 25 25"><path d="M0 0h24v18h-9l-4 6v-6H0z" fill="#fff" /><path d="M5 5.500h14M5 10h14M5 14.500h8" stroke="#430c07" strokeWidth="1.300" /><path d="M20 12q1 7-6 8.500 2 3.500 5.500 3 4.500-.5 4.500-5 0-4-4-6.500z" fill="#430c07" stroke="#fff" strokeWidth="1.300" /></svg>
);

/* ---------- data ---------- */
type TabData = { icon: React.ReactNode; title: string; w: number; ls?: number; fade?: boolean; audio?: boolean; active?: boolean };
const tabs: TabData[] = [
  { icon: <YouTube />, title: '(1) Secondhan', w: 109, fade: true, audio: true },
  { icon: <GitHub />, title: 'HayChaster/HayC', w: 138, fade: true },
  { icon: <GitHub />, title: 'HayChaster.githu', w: 138, fade: true, ls: -0.4 },
  { icon: <BlueSquare />, title: 'GrubNGo | Chast', w: 136, fade: true, ls: -0.45 },
  { icon: <BlueSquare />, title: 'Brian Hoole | Prof', w: 138, fade: true, ls: -0.4 },
  { icon: <Gmail />, title: 'Inbox - chaster@', w: 138, fade: true },
  { icon: <Doc />, title: "Grub N' Go", w: 120, active: true, ls: -0.2 },
];

const bookmarks = [
  { title: 'UHM homeowrk/pro', w: 163, fade: true, ls: -0.4 },
  { title: 'anime', w: 48 },
  { title: 'cospaly', w: 59 },
  { title: 'Steins; Gate program', w: 163, fade: true },
  { title: 'Girl the Wild', w: 99, ls: -0.15 },
  { title: 'ZELDA', w: 52 },
  { title: 'SOUL EATER', w: 98 },
];

const Tab = ({ tab, index }: { tab: TabData; index: number }) => {
  const End = tab.active ? ActiveTabEnd : TabEnd;
  return (
    <TabBox $z={tab.active ? 20 : 10 - index} $first={index === 0}>
      <TabShape width="245" height="43" viewBox="0 0 245 43">
        <path
          d="M-2 43.500Q1 43 2 40L17 5Q18.500 1.500 22 1.500H223Q225 1.500 226.500 5L241 39Q242.500 43 246 43.500"
          fill={tab.active ? '#050505' : ['#767676', '#6c6c6c', '#7a7a7a', '#737373', '#686868', '#7b7b7b'][index]}
          fillOpacity={tab.active ? 1 : 0.95}
          stroke={tab.active ? '#3a3a3a' : '#b4b4b4'}
          strokeWidth="1"
        />
        {tab.active && <path d="M172 3h52l17 40h-69z" fill="#1c1c1c" />}
        {tab.active && <path d="M172 12q30 5 57 1l2 7q-30 3-59-1zM172 30q30-3 63 1v3h-63z" fill="#3c3c3c" />}
        {!tab.active && <path d="M40 42l30-38h40l-12 38zM150 42l6-38h20l8 38z" fill="#555" opacity=".18" />}
      </TabShape>
      <TabIcon>{tab.icon}</TabIcon>
      <TabTitle $w={tab.w} $fade={tab.fade} $ls={tab.ls}>{tab.title}</TabTitle>
      <End>
        {tab.audio && <Speaker />}
        <Close />
      </End>
    </TabBox>
  );
};

const VendorCard = ({ kind, text, picture }: { kind: string; text: string; picture: React.ReactNode }) => (
  <CardBox>
    <CardContent>
      <div>
        <CardHeading>Vendors</CardHeading>
        <Meta>{kind}</Meta>
        <Description>{text}</Description>
      </div>
      {picture}
    </CardContent>
    <Strip $h={62}>Edit</Strip>
    <Strip $h={33} />
    <FormArea>
      <NoteForm>
        <Label>Add a timestamped note<Star>*</Star></Label>
        <Input />
        <Submit type="button">Submit</Submit>
      </NoteForm>
    </FormArea>
  </CardBox>
);

export default function App() {
  return (
    <Screen>
      <GlobalStyle />
      <Chrome>
        <ChromeTexture />
        <TabStrip>
          {tabs.map((t, i) => <Tab key={t.title} tab={t} index={i} />)}
          <NewTab viewBox="0 0 52 26">
            <path d="M4 1h34q3 0 4 3l7 18q0 2-2 2H15q-3 0-4-3L3 3q0-2 1-2z" fill="#848484" stroke="#aaa" />
          </NewTab>
          <WindowTools>
            <Person>Person 1</Person>
            <WindowButtons>
              <WindowButton><svg width="16" height="22"><rect x="0" y="12" width="13" height="5" fill="#bbb" /></svg></WindowButton>
              <WindowButton><svg width="18" height="20" viewBox="0 0 18 20" fill="none" stroke="#bbb" strokeWidth="2"><path d="M5 4V2h11v11h-3" /><rect x="2" y="7" width="10" height="10" /><rect x="5.500" y="10.500" width="3" height="3" /></svg></WindowButton>
              <WindowButton><Close color="#bbb" /></WindowButton>
            </WindowButtons>
          </WindowTools>
        </TabStrip>
        <Toolbar>
          <NavIcons><Back color="#fff" /><Forward color="#444" /><Reload /><Home /></NavIcons>
          <Omnibox>
            <Info />
            <Url><b>localhost</b>:3000/#/vendor</Url>
            <StarIcon />
          </Omnibox>
          <Extensions><ExtR /><ExtSync /><ExtReact /><ExtComet /><Dots /></Extensions>
        </Toolbar>
        <Bookmarks>
          <Bookmark>
            <BookmarkIcon $w={40}><AppsGrid /></BookmarkIcon>
            <BookmarkLabel $w={41} $ls={-0.2}>Apps</BookmarkLabel>
          </Bookmark>
          <Bookmark>
            <BookmarkIcon $w={37.5}><Doc /></BookmarkIcon>
            <BookmarkLabel $w={163} $fade $ls={-0.4}>Big Future - My Orga</BookmarkLabel>
          </Bookmark>
          {bookmarks.map((b) => (
            <Bookmark key={b.title}>
              <BookmarkIcon $w={39}><Folder /></BookmarkIcon>
              <BookmarkLabel $w={b.w} $fade={b.fade} $ls={b.ls}>{b.title}</BookmarkLabel>
            </Bookmark>
          ))}
          <Overflow>»</Overflow>
          <OtherBookmarks>
            <BookmarkIcon $w={39}><Folder /></BookmarkIcon>
            <BookmarkLabel $w={138} $ls={-0.36}>Other bookmarks</BookmarkLabel>
          </OtherBookmarks>
        </Bookmarks>
      </Chrome>

      <Page>
        <Menu>
          <Brand>Grub 'N' Go</Brand>
          <MenuItem $w={157}>Add Vendor</MenuItem>
          <MenuItem $w={162}>List Vendors</MenuItem>
          <MenuItem $w={221} $active>Vendor HomePage</MenuItem>
          <UserItem>vendor@foo.com<UserIcon /></UserItem>
        </Menu>
        <Title>Vendors Home</Title>
        <Columns>
          <VendorCard kind="Food" text="fillerBlack Forest Ham." picture={<SubwayLogo />} />
          <VendorCard kind="Drinks" text="bottled drinks" picture={<CansPicture />} />
        </Columns>
        <Rule />
        <Footer>
          <div>Department of Information and Computer Sciences</div>
          <div>University of Hawaii</div>
          <div>Honolulu, HI 96822</div>
        </Footer>
      </Page>

      <Taskbar>
        <Task $w={54}><WindowsLogo /></Task>
        <Task $w={55}><TaskView /></Task>
        <Task $w={61}><Edge /></Task>
        <Task $w={55}><Explorer /></Task>
        <Task><Overwatch /></Task>
        <Task><UTorrent /></Task>
        <Task><Store /></Task>
        <Task><Mail /></Task>
        <Task><Keyboard /></Task>
        <Task><Acl /></Task>
        <Task><IntelliJ /></Task>
        <Task><Steam /></Task>
        <Task><Word /></Task>
        <Task $open><Discord /></Task>
        <Task $active><ChromeLogo /></Task>
        <Task $open><Cmd /></Task>
        <Tray>
          <TrayCell $w={50}><People /></TrayCell>
          <TrayCell $w={38}><GreenDot /></TrayCell>
          <TrayCell $w={35}><Avast /></TrayCell>
          <TrayCell $w={38}><Defender /></TrayCell>
          <TrayCell $w={34}><Battery /></TrayCell>
          <TrayCell $w={36}><Drop /></TrayCell>
          <TrayCell $w={40}><Wifi /></TrayCell>
          <TrayCell $w={30}><Volume /></TrayCell>
          <TrayCell $w={60} $ls={-0.2}>ENG</TrayCell>
          <TrayCell $w={89} $ls={0.1}>9:19 PM</TrayCell>
          <TrayCell $w={70}><Notice /></TrayCell>
          <TrayCell $w={7} />
          <ShowDesktop />
        </Tray>
      </Taskbar>
    </Screen>
  );
}
